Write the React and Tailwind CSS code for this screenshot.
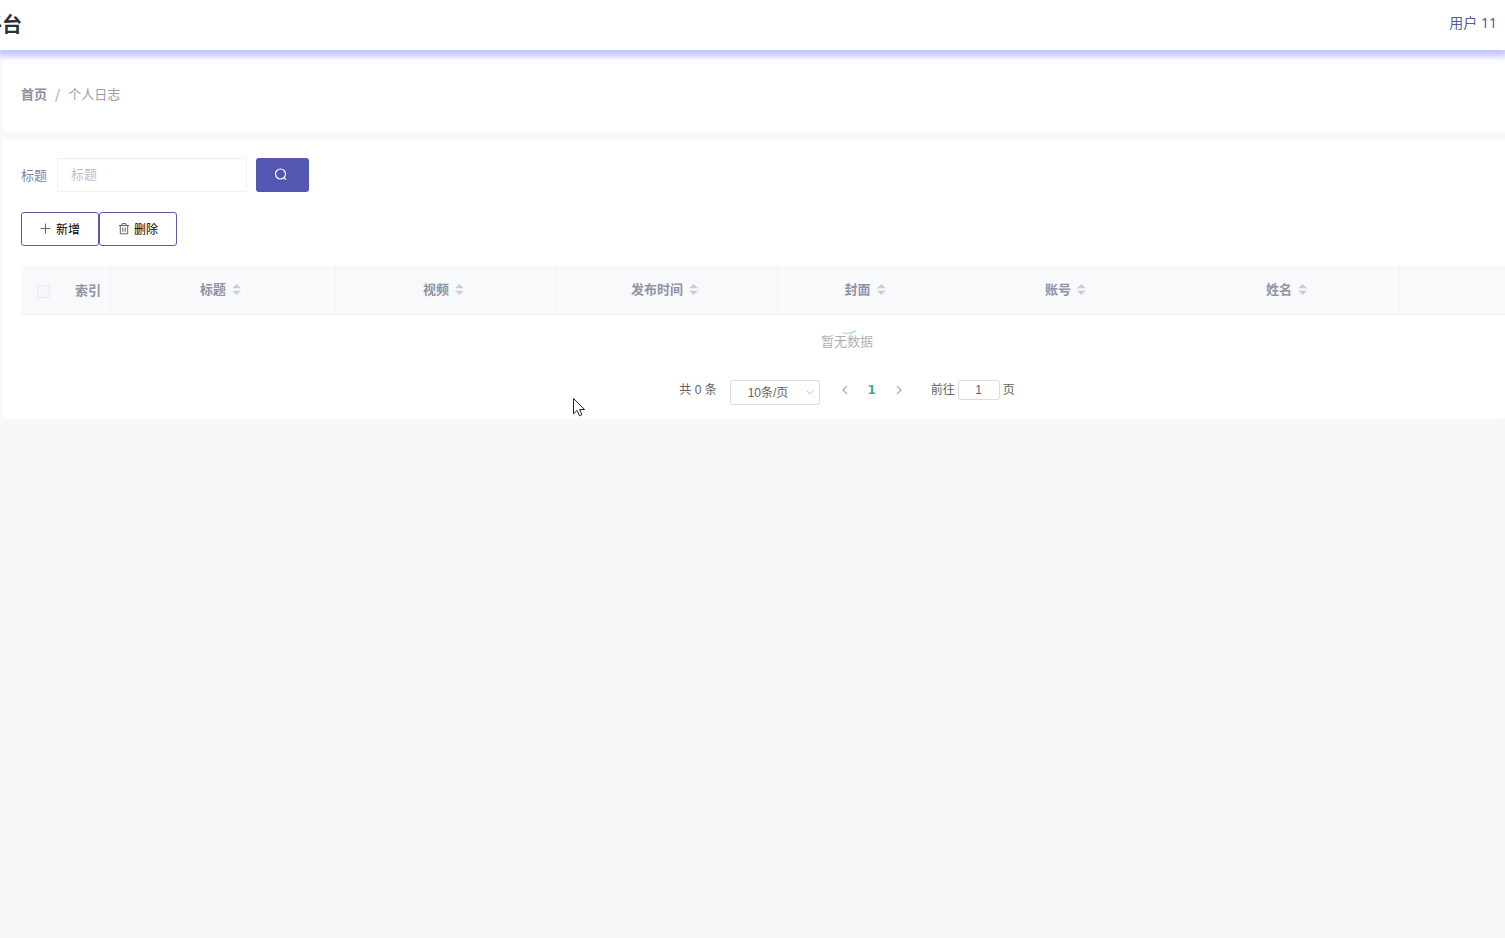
import React, { useState } from 'react';

const columns = [
  { title: '标题', width: 225 },
  { title: '视频', width: 221 },
  { title: '发布时间', width: 221 },
  { title: '封面', width: 180 },
  { title: '账号', width: 221 },
  { title: '姓名', width: 221 },
];

const SearchIcon = () => (
  <svg className="h-3.5 w-3.5" viewBox="0 0 14 14" fill="none" stroke="currentColor" strokeWidth="1.2" strokeLinecap="round">
    <circle cx="6.5" cy="6" r="5" />
    <path d="M10.2 9.8l1.6 1.6" />
  </svg>
);

const PlusIcon = () => (
  <svg className="h-3 w-3" viewBox="0 0 12 12" fill="none" stroke="#606266" strokeWidth="1">
    <path d="M5.5 0.5v10M0.5 5.5h10" />
  </svg>
);

const TrashIcon = () => (
  <svg className="h-3 w-3" viewBox="0 0 12 12" fill="none" stroke="#505258" strokeWidth="0.9">
    <path d="M1 2.5h10M2.3 2.5v8.3h7.4V2.5M4 2.5V0.6h4v1.9M4.8 4.5v4.3M7.2 4.5v4.3" />
  </svg>
);

const SortIcon = () => (
  <svg className="h-3 w-[9px]" viewBox="0 0 9 12" fill="#cccdd3">
    <path d="M4.5 1L9 5.3H0zM4.5 12L9 7.7H0z" />
  </svg>
);

const Chevron = ({ d, className }) => (
  <svg className={className} viewBox="0 0 12 12" fill="none" stroke="currentColor">
    <path d={d} />
  </svg>
);

const Header = () => (
  <header className="relative z-10 flex h-[50px] items-center justify-between overflow-x-clip bg-white pr-2 shadow-[0_4px_6px_2px_#c1c6fc]">
    <h1 className="-ml-[18px] pb-0.5 text-xl leading-6 font-bold text-[#2b2f3a]">平台</h1>
    <a href="#user" className="pb-1 font-['Noto_Sans','Noto_Sans_CJK_SC',sans-serif] text-sm text-[#5658a0]">用户 11</a>
  </header>
);

const Breadcrumb = () => (
  <nav className="flex h-[72px] items-center gap-2 bg-white px-[18px] pb-0.5 text-[13px] text-[#9a9dae] shadow-[0_0_4px_#fff]">
    <a href="#home" className="font-bold text-[#8b8e9d]">首页</a>
    <span>/</span>
    <span>个人日志</span>
  </nav>
);

const Toolbar = () => (
  <>
    <form className="flex items-center" onSubmit={(e) => e.preventDefault()}>
      <label htmlFor="title" className="mr-2.5 text-[13px] text-[#8284a4]">标题</label>
      <input
        id="title"
        type="text"
        placeholder="标题"
        className="mr-[9px] h-[34px] w-[190px] rounded-xs border border-[#eeeff8] px-[13px] pb-1 text-[13px] outline-none placeholder:text-[#bfc1cb]"
      />
      <button type="submit" aria-label="搜索" className="flex h-[34px] w-[53px] items-center rounded-[3px] bg-[#5457b1] pl-[18px] text-white">
        <SearchIcon />
      </button>
    </form>
    <div className="mt-5 flex">
      <button className="flex h-[34px] w-[78px] items-center justify-center gap-1 rounded-[3px] border border-[#5a5ba9] bg-white text-xs text-black">
        <PlusIcon />
        新增
      </button>
      <button className="flex h-[34px] w-[78px] items-center justify-center gap-1 rounded-[3px] border border-[#5a5ba9] bg-white text-xs text-black">
        <TrashIcon />
        删除
      </button>
    </div>
  </>
);

const DataTable = () => (
  <table className="mt-5 w-full table-fixed border-collapse text-[13px]">
    <thead>
      <tr className="h-12 border-b border-[#ecedf2] bg-[#f8f9fb] text-[#9092a5]">
        <th className="w-[45px] border-r border-[#f2f3f7] pt-1">
          <input type="checkbox" aria-label="全选" className="mx-auto block h-[13px] w-[13px] appearance-none rounded-xs border border-[#e8eaf4] bg-[#f4f6fc]" />
        </th>
        <th className="w-[44px] border-r border-[#f2f3f7] font-bold">索引</th>
        {columns.map((col) => (
          <th key={col.title} style={{ width: col.width }} className="border-r border-[#f2f3f7] pb-0.5 font-bold">
            <span className="flex items-center justify-center gap-1.5 pr-1">
              {col.title}
              <SortIcon />
            </span>
          </th>
        ))}
        <th></th>
      </tr>
    </thead>
    <tbody>
      <tr>
        <td colSpan={9} className="h-[54px] pb-0.5 text-center text-[#aeb0b5]">
          <span className="relative inline-block">
            暂无数据
            {/* loading ring, only its tail is still visible */}
            <svg className="absolute -top-0.5 left-5 h-1.5 w-4" viewBox="0 0 16 6" fill="none" stroke="#b4e6d5" strokeWidth="1.6" strokeLinecap="round">
              <path d="M2.5 4Q9 5.5 14.5 2" />
            </svg>
          </span>
        </td>
      </tr>
    </tbody>
  </table>
);

const Pagination = () => {
  const [page, setPage] = useState('1');

  return (
    <div className="flex h-[50px] items-start justify-center pt-3 font-['Liberation_Sans','Noto_Sans_CJK_SC',sans-serif] text-xs leading-5 text-[#606266]">
      <span className="mr-[13px]">共 0 条</span>
      <div className="relative mr-[18px]">
        <select aria-label="每页条数" className="block h-[25px] w-[90px] appearance-none rounded-xs border border-[#dcdde4] bg-white pl-[17px] text-xs outline-none">
          <option>10条/页</option>
          <option>20条/页</option>
          <option>50条/页</option>
        </select>
        <Chevron className="pointer-events-none absolute top-1.5 right-1 h-3 w-3 text-[#c5c8d0]" d="M2.5 4.5L6 8l3.5-3.5" />
      </div>
      <button aria-label="上一页" className="flex h-5 w-3.5 items-center justify-center text-[#b5b7bd]">
        <Chevron className="h-3 w-3 stroke-[1.5]" d="M8 2L4 6l4 4" />
      </button>
      <button className="h-5 w-10 font-['DejaVu_Sans',sans-serif] text-xs font-bold text-[#2fb38c]">1</button>
      <button aria-label="下一页" className="flex h-5 w-3.5 items-center justify-center text-[#b5b7bd]">
        <Chevron className="h-3 w-3 stroke-[1.5]" d="M4 2l4 4-4 4" />
      </button>
      <label className="ml-[25px] flex gap-[3px]">
        前往
        <input
          type="text"
          value={page}
          onChange={(e) => setPage(e.target.value)}
          className="h-5 w-[42px] rounded-[3px] border border-[#dcdde4] text-center text-xs outline-none"
        />
        页
      </label>
    </div>
  );
};

const Cursor = () => (
  <svg className="pointer-events-none absolute top-[397px] left-[572px] z-20 h-5 w-3.5" viewBox="0 0 14 20" fill="#fff" stroke="#222" strokeWidth="1">
    <path d="M1.5 1.5v15.3l3.6-3.4 2.4 5.4 2.4-1.1-2.3-5.2h5z" />
  </svg>
);

export default function App() {
  return (
    <div className="relative min-h-screen overflow-hidden bg-[#f7f8fa] font-['Noto_Sans_CJK_SC',sans-serif]">
      <Header />
      <main className="flex flex-col gap-[9px] pt-[9px] pl-[3px]">
        <Breadcrumb />
        <section className="overflow-hidden bg-white pt-[18px] pl-[18px] shadow-[0_0_4px_#fff]">
          <Toolbar />
          {/* the grid is wider than the window and runs off its right edge */}
          <div className="w-[1652px]">
            <DataTable />
            <Pagination />
          </div>
        </section>
      </main>
      <Cursor />
    </div>
  );
}
